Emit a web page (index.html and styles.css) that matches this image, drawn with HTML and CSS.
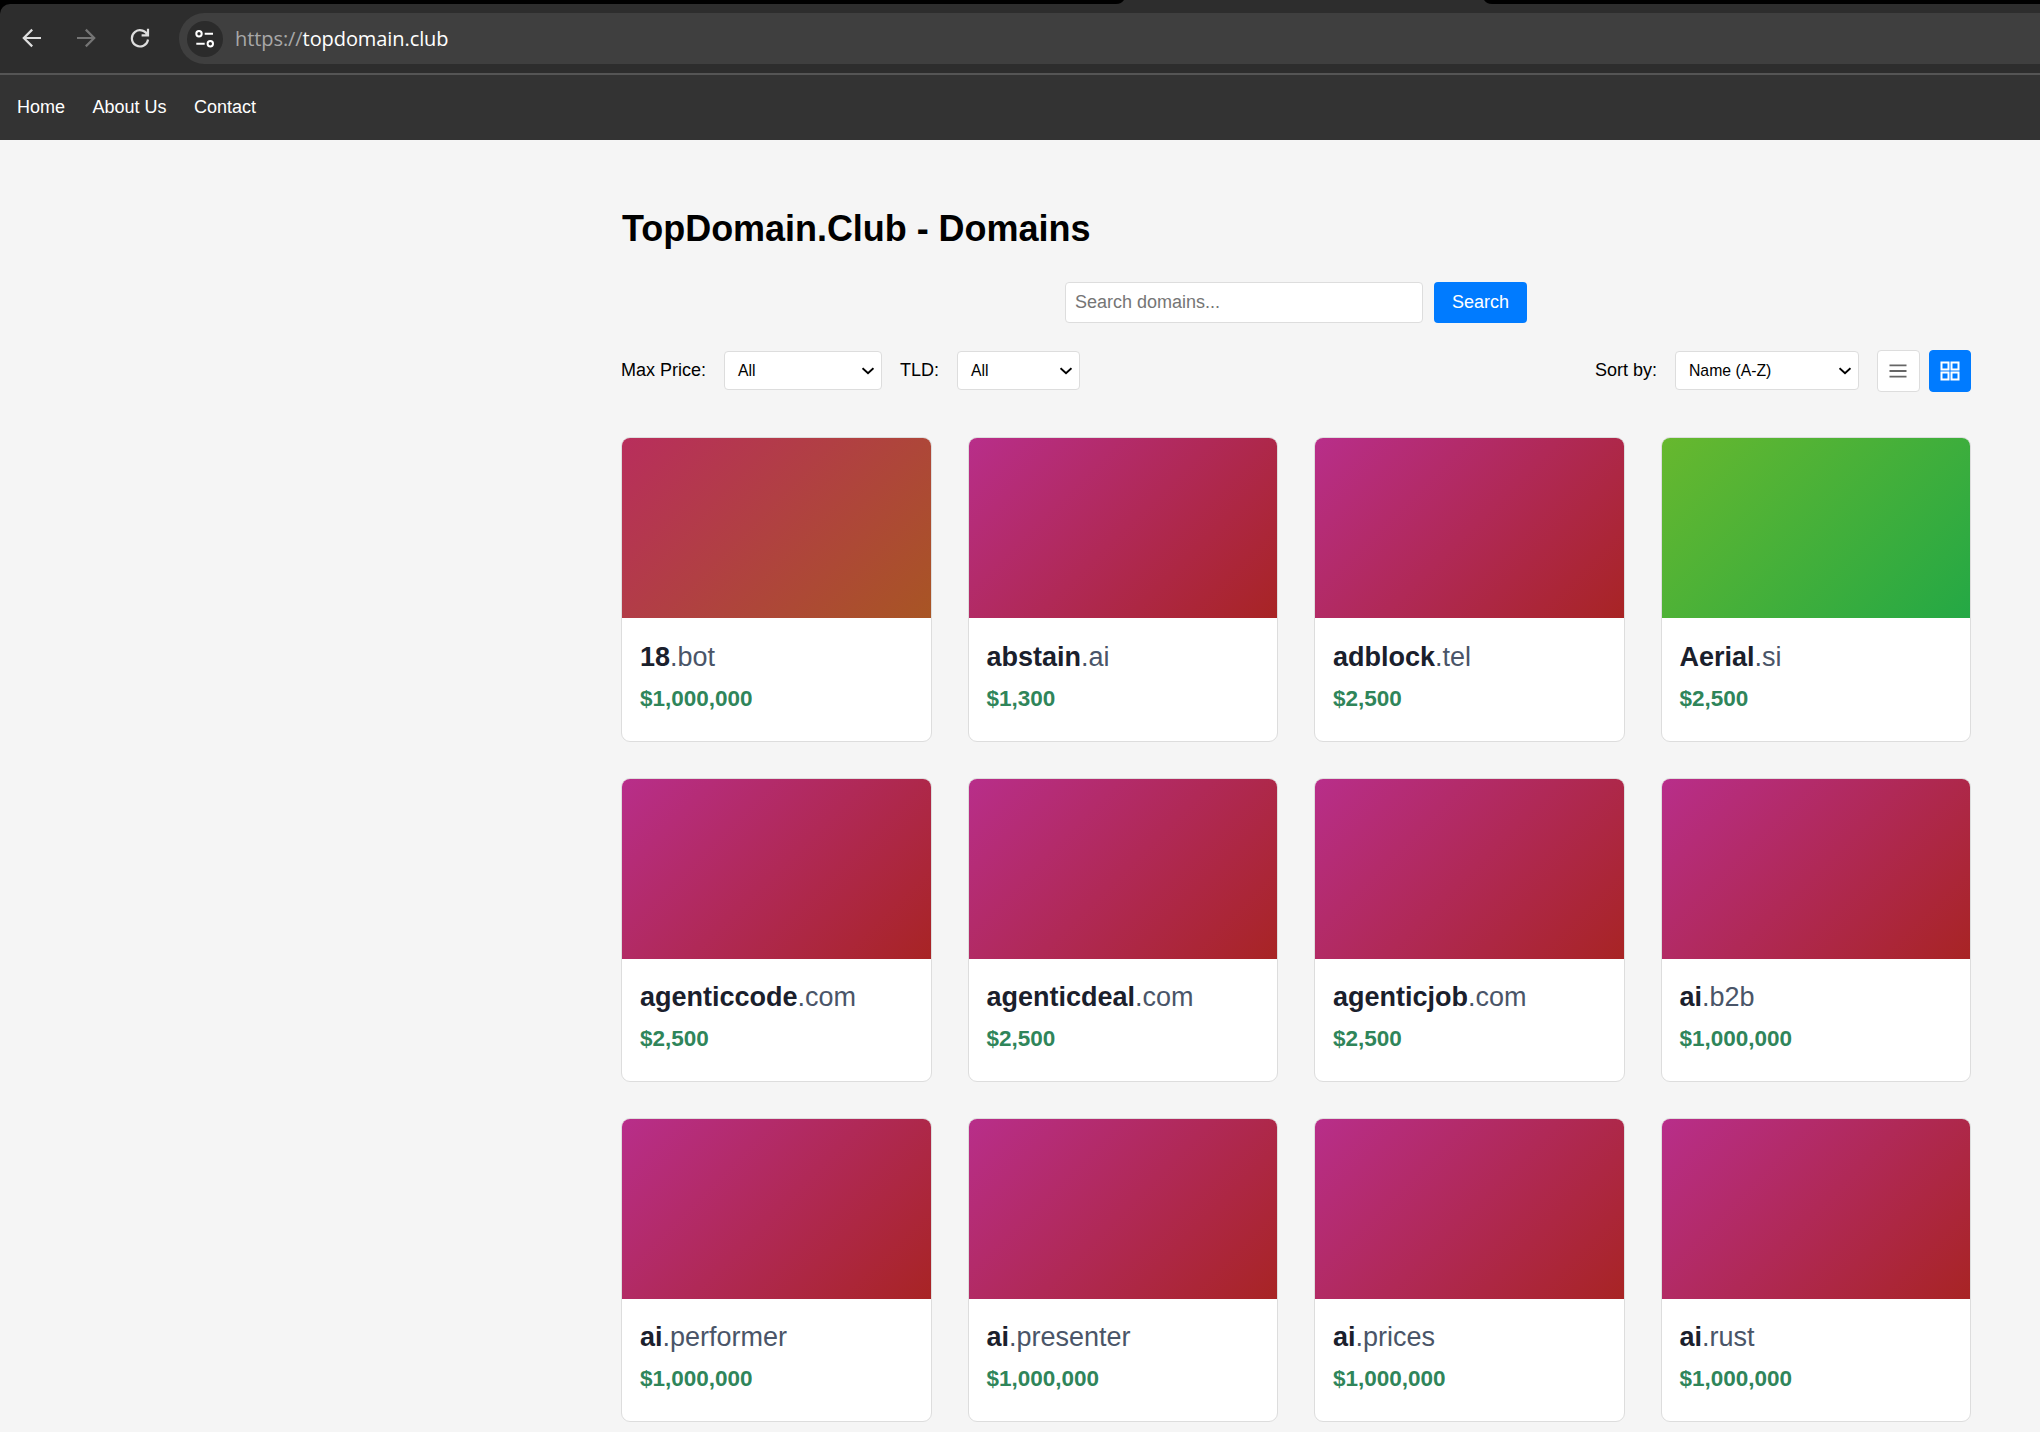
FILE: index.html
```html
<!DOCTYPE html>
<html lang="en">
<head>
<meta charset="utf-8">
<title>TopDomain.Club - Domains</title>
<link rel="stylesheet" href="styles.css">
</head>
<body>
<div class="browser">
  <svg class="tab" width="376" height="4" viewBox="0 0 376 4"><path d="M0 4C4 4 6 2.500 8 0H368C370 2.500 372 4 376 4Z" fill="#2d2d2d"/></svg>
  <div class="toolbar">
    <svg class="tool" width="20" height="20" viewBox="0 0 20 20" fill="none" stroke="#dedede" stroke-width="2.200"><path d="M19 10H2M10.200 1.600 1.800 10l8.400 8.400"/></svg>
    <svg class="tool" width="20" height="20" viewBox="0 0 20 20" fill="none" stroke="#757575" stroke-width="2.200"><path d="M1 10h17M9.800 1.600 18.200 10l-8.400 8.400"/></svg>
    <svg class="tool" width="20" height="20" viewBox="0 0 20 20" fill="none" stroke="#dedede" stroke-width="2.200"><path d="M17.800 8.200A8.100 8.100 0 1 0 18 11.500M18 .8v6.600h-6.400"/></svg>
    <div class="address">
      <span class="site-info"><svg width="20" height="20" viewBox="0 0 20 20" fill="none" stroke="#fff" stroke-width="2"><circle cx="4" cy="4.800" r="2.700"/><path d="M9.700 4.800H18M1.300 14.800H9.700"/><circle cx="15.300" cy="14.800" r="2.700"/></svg></span>
      <span class="url"><span class="scheme">https://</span><span class="host">topdomain.club</span></span>
    </div>
  </div>
</div>
<nav class="nav"><a>Home</a><a>About Us</a><a>Contact</a></nav>
<main class="container">
  <h1>TopDomain.Club - Domains</h1>
  <form class="search"><input type="text" placeholder="Search domains..."><button type="button">Search</button></form>
  <div class="controls">
    <span class="label price-label">Max Price:</span>
    <div class="select max-price"><span>All</span><svg width="12" height="8" viewBox="0 0 12 8"><path d="M.5 1.200 6 6.200l5.500-5"/></svg></div>
    <span class="label tld-label">TLD:</span>
    <div class="select tld-select"><span>All</span><svg width="12" height="8" viewBox="0 0 12 8"><path d="M.5 1.200 6 6.200l5.500-5"/></svg></div>
    <span class="label sort-label">Sort by:</span>
    <div class="select sort"><span>Name (A-Z)</span><svg width="12" height="8" viewBox="0 0 12 8"><path d="M.5 1.200 6 6.200l5.500-5"/></svg></div>
    <div class="views">
      <button class="view" type="button" aria-label="List view"><svg width="19" height="18" viewBox="0 0 19 18" fill="none" stroke="#666" stroke-width="1.800"><path d="M.5 3.300h17M.5 9h17M.5 14.700h17"/></svg></button>
      <button class="view active" type="button" aria-label="Grid view"><svg width="20" height="20" viewBox="0 0 20 20" fill="none" stroke="#fff" stroke-width="2"><path d="M1.500 1.500h7v7h-7zM11.500 1.500h7v7h-7zM1.500 11.500h7v7h-7zM11.500 11.500h7v7h-7z"/></svg></button>
    </div>
  </div>
  <section class="grid">
    <article class="card"><div class="cover rust"></div><h2>18<span>.bot</span></h2><p>$1,000,000</p></article>
    <article class="card"><div class="cover"></div><h2>abstain<span>.ai</span></h2><p>$1,300</p></article>
    <article class="card"><div class="cover"></div><h2>adblock<span>.tel</span></h2><p>$2,500</p></article>
    <article class="card"><div class="cover green"></div><h2>Aerial<span>.si</span></h2><p>$2,500</p></article>
    <article class="card"><div class="cover"></div><h2>agenticcode<span>.com</span></h2><p>$2,500</p></article>
    <article class="card"><div class="cover"></div><h2>agenticdeal<span>.com</span></h2><p>$2,500</p></article>
    <article class="card"><div class="cover"></div><h2>agenticjob<span>.com</span></h2><p>$2,500</p></article>
    <article class="card"><div class="cover"></div><h2>ai<span>.b2b</span></h2><p>$1,000,000</p></article>
    <article class="card"><div class="cover"></div><h2>ai<span>.performer</span></h2><p>$1,000,000</p></article>
    <article class="card"><div class="cover"></div><h2>ai<span>.presenter</span></h2><p>$1,000,000</p></article>
    <article class="card"><div class="cover"></div><h2>ai<span>.prices</span></h2><p>$1,000,000</p></article>
    <article class="card"><div class="cover"></div><h2>ai<span>.rust</span></h2><p>$1,000,000</p></article>
  </section>
</main>
</body>
</html>
```

FILE: styles.css
```css
* { box-sizing: border-box; }
body {
  margin: 0;
  height: 1432px;
  overflow: hidden;
  background: #f5f5f5;
  color: #000;
  font: 18px/21px "Liberation Sans", Arial, sans-serif;
}
svg { display: block; flex: none; }

.browser { background: #000; height: 75px; }
.tab { margin-left: 1116px; }
.toolbar {
  display: flex;
  align-items: center;
  height: 71px;
  padding: 0 0 2px 22px;
  background: #2d2d2d;
  border-bottom: 2px solid #555;
  border-top-left-radius: 10px;
}
.tool { margin-right: 34px; }
.address {
  display: flex;
  align-items: center;
  flex: 1;
  height: 51px;
  margin: 2px 0 0 -5px;
  padding-left: 8px;
  background: #3f3f3f;
  border-radius: 26px 0 0 26px;
}
.site-info {
  display: grid;
  place-items: center;
  width: 36px;
  height: 36px;
  border-radius: 50%;
  background: #2b2b2b;
}
.url {
  margin-left: 12px;
  padding-top: 1px;
  font: 20px/28px "Open Sans", "Noto Sans", sans-serif;
  letter-spacing: -0.08px;
}
.scheme { color: #a8a8a8; }
.host { color: #fff; }

.nav {
  display: flex;
  align-items: center;
  gap: 27.5px;
  height: 65px;
  padding: 0 17px;
  background: #333;
  color: #fff;
}

.container { width: 1350px; margin-left: 621px; padding-top: 68px; }
h1 { margin: 0 0 0 1px; font-size: 36px; line-height: 42px; letter-spacing: -0.04px; }
.search {
  display: flex;
  gap: 11px;
  margin: 32px 0 0 444px;
}
.search input {
  width: 358px;
  height: 41px;
  padding: 0 9px;
  border: 1px solid #ddd;
  border-radius: 4px;
  background: #fff;
  font: inherit;
}
.search input::placeholder { color: #757575; }
.search button {
  width: 93px;
  height: 41px;
  padding: 0;
  border: 0;
  border-radius: 4px;
  background: #007bff;
  color: #fff;
  font: inherit;
}
.controls {
  display: flex;
  align-items: flex-start;
  height: 42px;
  margin-top: 27px;
}
.label { white-space: nowrap; line-height: 40px; }
.price-label { width: 103px; }
.tld-label { width: 57px; margin-left: 18px; }
.sort-label { width: 80px; margin-left: auto; }
.select {
  display: flex;
  align-items: center;
  justify-content: space-between;
  height: 39px;
  margin-top: 1px;
  padding: 0 7.5px 0 13px;
  border: 1px solid #ddd;
  border-radius: 4px;
  background: #fff;
  font-size: 15.75px;
}
.select path { fill: none; stroke: #000; stroke-width: 2; }
.max-price { width: 158px; }
.tld-select { width: 123px; }
.sort { width: 184px; }
.views { display: flex; gap: 9px; margin-left: 18px; }
.view {
  display: grid;
  place-items: center;
  width: 43px;
  height: 42px;
  padding: 0;
  border: 1px solid #ddd;
  border-radius: 4px;
  background: #fff;
}
.view.active { width: 42px; border-color: #007bff; background: #007bff; }

.grid {
  display: grid;
  grid-template-columns: repeat(4, 1fr);
  gap: 36px;
  margin-top: 45.4px;
}
.card {
  height: 304.3px;
  overflow: hidden;
  border: 1px solid #ddd;
  border-radius: 9px;
  background: #fff;
}
.cover { height: 180px; background: linear-gradient(135deg, #b82e8a, #a82424); }
.rust { background: linear-gradient(135deg, #b82e5c, #a85524); }
.green { background: linear-gradient(135deg, #67b82e, #24a845); }
h2 {
  margin: 22.2px 18px 0;
  color: #1a202c;
  font-size: 27px;
  line-height: 32px;
}
h2 span { color: #4a5568; font-weight: 400; }
.card p {
  margin: 13.1px 18px 0;
  color: #2f855a;
  font-size: 22.5px;
  font-weight: 700;
  line-height: 26px;
}
```
